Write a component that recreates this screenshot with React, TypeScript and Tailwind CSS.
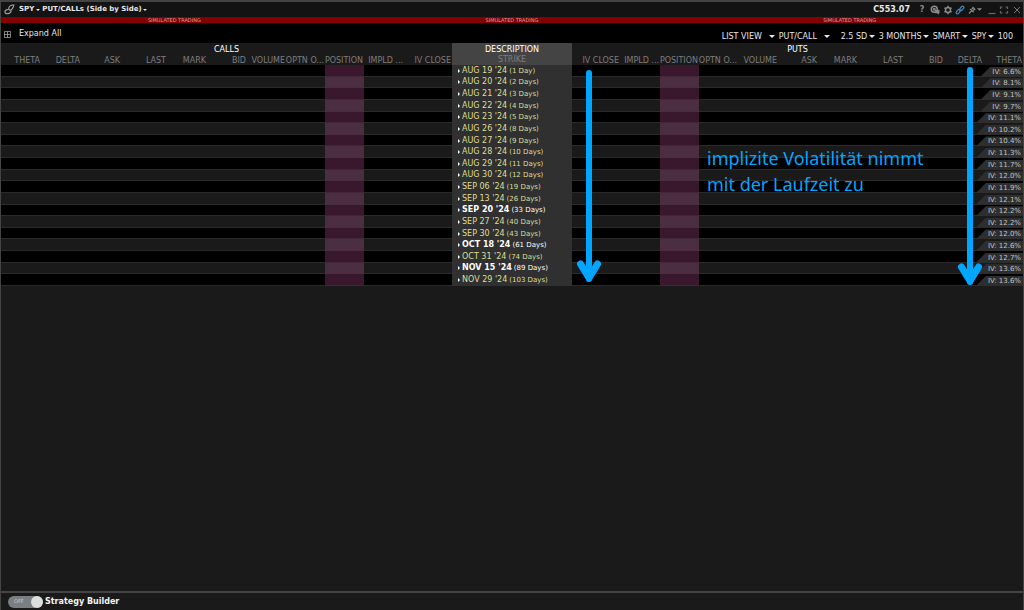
import type { ReactNode } from "react";
import clsx from "clsx";

interface Expiry {
  date: string;
  days: number;
  iv: string;
  monthly?: boolean;
}

const expiries: Expiry[] = [
  { date: "AUG 19 '24", days: 1, iv: "6.6%" },
  { date: "AUG 20 '24", days: 2, iv: "8.1%" },
  { date: "AUG 21 '24", days: 3, iv: "9.1%" },
  { date: "AUG 22 '24", days: 4, iv: "9.7%" },
  { date: "AUG 23 '24", days: 5, iv: "11.1%" },
  { date: "AUG 26 '24", days: 8, iv: "10.2%" },
  { date: "AUG 27 '24", days: 9, iv: "10.4%" },
  { date: "AUG 28 '24", days: 10, iv: "11.3%" },
  { date: "AUG 29 '24", days: 11, iv: "11.7%" },
  { date: "AUG 30 '24", days: 12, iv: "12.0%" },
  { date: "SEP 06 '24", days: 19, iv: "11.9%" },
  { date: "SEP 13 '24", days: 26, iv: "12.1%" },
  { date: "SEP 20 '24", days: 33, iv: "12.2%", monthly: true },
  { date: "SEP 27 '24", days: 40, iv: "12.2%" },
  { date: "SEP 30 '24", days: 43, iv: "12.0%" },
  { date: "OCT 18 '24", days: 61, iv: "12.6%", monthly: true },
  { date: "OCT 31 '24", days: 74, iv: "12.7%" },
  { date: "NOV 15 '24", days: 89, iv: "13.6%", monthly: true },
  { date: "NOV 29 '24", days: 103, iv: "13.6%" },
];

const callColumns = ["THETA", "DELTA", "ASK", "LAST", "MARK", "BID", "VOLUME", "OPTN O...", "POSITION", "IMPLD ...", "IV CLOSE"];
const putColumns = ["IV CLOSE", "IMPLD ...", "POSITION", "OPTN O...", "VOLUME", "ASK", "MARK", "LAST", "BID", "DELTA", "THETA"];

// 11 call columns, the description, 11 put columns
const rowGrid =
  "grid grid-cols-[40fr_40fr_40fr_46fr_40fr_40fr_39fr_39fr_39fr_40fr_48fr_120fr_48fr_40fr_39fr_39fr_40fr_40fr_40fr_46fr_40fr_39fr_40fr]";

function Caret({ className = "h-[3px] w-[6px]" }: { className?: string }) {
  return (
    <svg viewBox="0 0 6 3" className={clsx("pointer-events-none shrink-0", className)} fill="currentColor">
      <path d="M0 0h6L3 3z" />
    </svg>
  );
}

function Picker({ label, value, wide }: { label: string; value: string; wide?: boolean }) {
  return (
    <label className={clsx("flex items-center", wide ? "gap-[6px]" : "gap-px")}>
      <select aria-label={label} className="appearance-none bg-transparent p-0 text-[8px] leading-[12px] text-gray-200 outline-none">
        <option>{value}</option>
      </select>
      <Caret />
    </label>
  );
}

function IconButton({ label, className, children }: { label: string; className?: string; children: ReactNode }) {
  return (
    <button aria-label={label} className={className}>
      <svg viewBox="0 0 10 10" className="size-[10px]" fill="none" stroke="currentColor" strokeWidth="1.2">
        {children}
      </svg>
    </button>
  );
}

function TitleBar() {
  return (
    <header className="flex h-[15px] items-center bg-[#131313] pr-[2px] pl-[3px] text-[#8a8a8a]">
      <svg viewBox="0 0 12 12" className="mr-1 size-[11px] text-[#a8a8a8]" fill="none" stroke="currentColor" strokeWidth="1.2">
        <path d="M10.8 1.2C7.5.8 5.2 2.5 5.1 5.2c0 1.7 2.2 2 3.4.6C9.6 4.5 10.4 3 10.8 1.2z" />
        <path d="M4.8 6C2.5 6 1 7.3 1 8.8c0 2 3 2.2 4.8 1.2 1.5-.8 2.2-2 1.7-3" />
      </svg>
      <button className="flex items-center gap-[2px] text-[7px] font-bold text-gray-200">
        SPY <Caret className="h-[2px] w-[4px]" />
      </button>
      <button className="ml-[2px] flex items-center gap-px text-[7px] font-bold text-gray-200">
        PUT/CALLs (Side by Side) <Caret className="h-[2px] w-[4px]" />
      </button>
      <span className="mr-[9px] ml-auto text-[8px] font-bold text-gray-200">C553.07</span>
      <div className="flex items-center gap-[2px]">
        <button aria-label="Help" className="mr-[3px] w-[6px] text-[8px] font-bold">
          ?
        </button>
        <IconButton label="Messages">
          <circle cx="4.3" cy="4.3" r="3" strokeWidth="1.5" />
          <circle cx="4.3" cy="4.3" r=".9" />
          <path d="M5.2 5.2h4v2.800H8.600v1.300L7.300 8H5.200z" fill="currentColor" strokeWidth=".6" />
        </IconButton>
        <IconButton label="Settings" className="ml-px">
          <circle cx="5" cy="5" r="2.5" strokeWidth="1.5" />
          <path d="M5 .8v1.500M5 7.700v1.500M1.400 2.900l1.300.7M7.300 6.400l1.300.7M1.400 7.100l1.300-.7M7.300 3.600l1.300-.7" strokeWidth="1.500" />
        </IconButton>
        <IconButton label="Link" className="text-[#3b8cc0]">
          <path d="M5 3.300l1.500-1.700a1.200 1.200 0 0 1 2 1.700L7 5.100a1.200 1.200 0 0 1-2 0z" />
          <path d="M5 6.700L3.500 8.400a1.200 1.200 0 0 1-2-1.700L3 4.900a1.200 1.200 0 0 1 2 0z" />
        </IconButton>
        <IconButton label="Pin">
          <path d="M5.500 2l2.800 2.600M6.200 2.700L4.700 4.300M7.600 4L6.200 5.700M3 3.900l3.600 3.300M4.600 5.600L2 8.500" />
        </IconButton>
        <button aria-label="Window menu" className="-ml-[2px]">
          <Caret className="h-[3px] w-[5px]" />
        </button>
        <IconButton label="Minimize" className="ml-[3px] text-[#666]">
          <path d="M1.500 8.500h7" />
        </IconButton>
        <IconButton label="Maximize" className="text-[#666]">
          <path d="M1.500 4V2h2M6.500 2h2v2M8.500 6v2h-2M3.500 8h-2V6" />
        </IconButton>
        <IconButton label="Close" className="-mr-px ml-px text-[#777]">
          <path d="M2 2l6 6M8 2L2 8" strokeWidth="1" />
        </IconButton>
      </div>
    </header>
  );
}

function Toolbar() {
  return (
    <div className="flex h-[20px] items-center bg-black pt-[2px] pr-[10px] pl-[3px] text-gray-200">
      <button className="flex items-center gap-2 text-[8px]">
        <svg viewBox="0 0 8 8" className="size-[7px] text-[#999]" fill="none" stroke="currentColor">
          <path d="M.5.5h7v7h-7zM4 .5v7M.5 4h7" />
        </svg>
        Expand All
      </button>
      <div className="ml-auto flex items-center gap-[4px] pt-[5px] text-[8px] leading-[12px]">
        <Picker label="View" value="LIST VIEW" wide />
        <Picker label="Type" value="PUT/CALL" wide />
        <span className="w-[3px]" />
        <Picker label="Strikes" value="2.5 SD" />
        <Picker label="Range" value="3 MONTHS" />
        <Picker label="Exchange" value="SMART" />
        <Picker label="Class" value="SPY" />
        <span>100</span>
      </div>
    </div>
  );
}

function HeadCells({ columns }: { columns: string[] }) {
  return columns.map((c) => (
    <th key={c} scope="col" className="flex min-w-0 justify-end pr-px font-normal whitespace-nowrap">
      {c}
    </th>
  ));
}

function ChainRow({ expiry, striped }: { expiry: Expiry; striped: boolean }) {
  const cell = (name: string) => (
    <td
      key={name}
      className={clsx(
        "min-w-0 border-b",
        name === "POSITION"
          ? striped
            ? "border-[#4a2c40] bg-[#4c2e42]"
            : "border-[#432539] bg-[#39182e]"
          : "border-[#2b2b2b]",
      )}
    />
  );

  return (
    <tr className={clsx("min-h-0 flex-1", rowGrid, striped ? "bg-[#1a1a1a]" : "bg-black")}>
      {callColumns.map(cell)}
      <td className="flex min-w-0 items-center bg-[#303030] pl-[6px] leading-[10px] whitespace-nowrap">
        <button className={clsx("flex items-center", expiry.monthly ? "text-white" : "text-[#dede96]")}>
          <svg viewBox="0 0 2 4" className="mr-[2px] h-[4px] w-[2px] text-white" fill="currentColor">
            <path d="M0 0l2 2-2 2z" />
          </svg>
          <span className={clsx("text-[8px]", expiry.monthly && "font-bold")}>{expiry.date}</span>
          <span className="ml-[2px] text-[7px]">
            ({expiry.days} {expiry.days === 1 ? "Day" : "Days"})
          </span>
        </button>
      </td>
      {putColumns.slice(0, -1).map(cell)}
      <td className="flex min-w-0 items-end justify-end border-b border-[#2b2b2b]">
        <span className="-mb-px shrink-0 bg-[#2e2e2e] pr-[2px] pl-3 text-[7px] leading-[10px] whitespace-nowrap text-[#c4c4c4] [clip-path:polygon(10px_0,100%_0,100%_100%,0_100%)]">
          IV: {expiry.iv}
        </span>
      </td>
    </tr>
  );
}

function Arrow({ length, className }: { length: number; className: string }) {
  const tip = length - 3;
  return (
    <svg
      width="26"
      height={length}
      className={clsx("absolute text-[#00a6ff]", className)}
      fill="none"
      stroke="currentColor"
      strokeLinecap="round"
      strokeLinejoin="round"
    >
      <path d={`M13 3V${tip}`} strokeWidth="6" />
      <path d={`M4.5 ${tip - 15}L13 ${tip - 1}l8.5-14`} strokeWidth="7" />
    </svg>
  );
}

export default function App() {
  return (
    <div className="flex min-h-screen flex-col border-x border-t-2 border-[#444] bg-[#1a1a1a] font-['DejaVu_Sans',sans-serif] text-gray-200">
      <TitleBar />
      <div className="grid h-[6px] grid-cols-[346fr_328fr_346fr] items-center bg-[#850000] text-center text-[5px] leading-[6px] text-[#d9a0a0]">
        <span>SIMULATED TRADING</span>
        <span>SIMULATED TRADING</span>
        <span>SIMULATED TRADING</span>
      </div>
      <Toolbar />

      <main className="relative flex-1">
        <table className="flex w-full flex-col text-[8px]">
          <thead className="flex flex-col">
            <tr className="grid h-[11px] grid-cols-[451fr_120fr_451fr] leading-[13px]">
              <th scope="colgroup" className="font-normal text-white">CALLS</th>
              <th scope="col" className="bg-[#444] font-normal text-white">DESCRIPTION</th>
              <th scope="colgroup" className="font-normal text-white">PUTS</th>
            </tr>
            <tr className={clsx("h-[11px] leading-[13px] text-[#7d7d7d]", rowGrid)}>
              <HeadCells columns={callColumns} />
              <th scope="col" className="bg-[#444] font-normal leading-[11px]">STRIKE</th>
              <HeadCells columns={putColumns} />
            </tr>
          </thead>
          <tbody className="flex h-[221px] flex-col">
            {expiries.map((e, i) => (
              <ChainRow key={e.date} expiry={e} striped={i % 2 === 1} />
            ))}
          </tbody>
        </table>

        <Arrow length={212} className="top-[27px] left-[575px]" />
        <Arrow length={218} className="top-[24px] right-[40px]" />
        <p className="absolute top-[102px] left-[706px] font-['Noto_Sans',sans-serif] text-[18px] leading-[26px] whitespace-nowrap text-[#00a6ff]">
          implizite Volatilität nimmt
          <br />
          mit der Laufzeit zu
        </p>
      </main>

      <footer className="flex h-[19px] items-center border-t-2 border-[#444] pt-px pl-[7px]">
        <label className="flex items-center gap-[2px] text-[8px] font-bold text-gray-100">
          <span className="relative flex h-[12px] w-[35px] items-center rounded-full bg-[#7b7f83] pl-[6px] text-[5px] font-normal text-[#c8c8c8]">
            <input type="checkbox" className="absolute inset-0 appearance-none" />
            OFF
            <span className="absolute right-0 size-[12px] rounded-full bg-[#dedede]" />
          </span>
          Strategy Builder
        </label>
      </footer>
    </div>
  );
}
